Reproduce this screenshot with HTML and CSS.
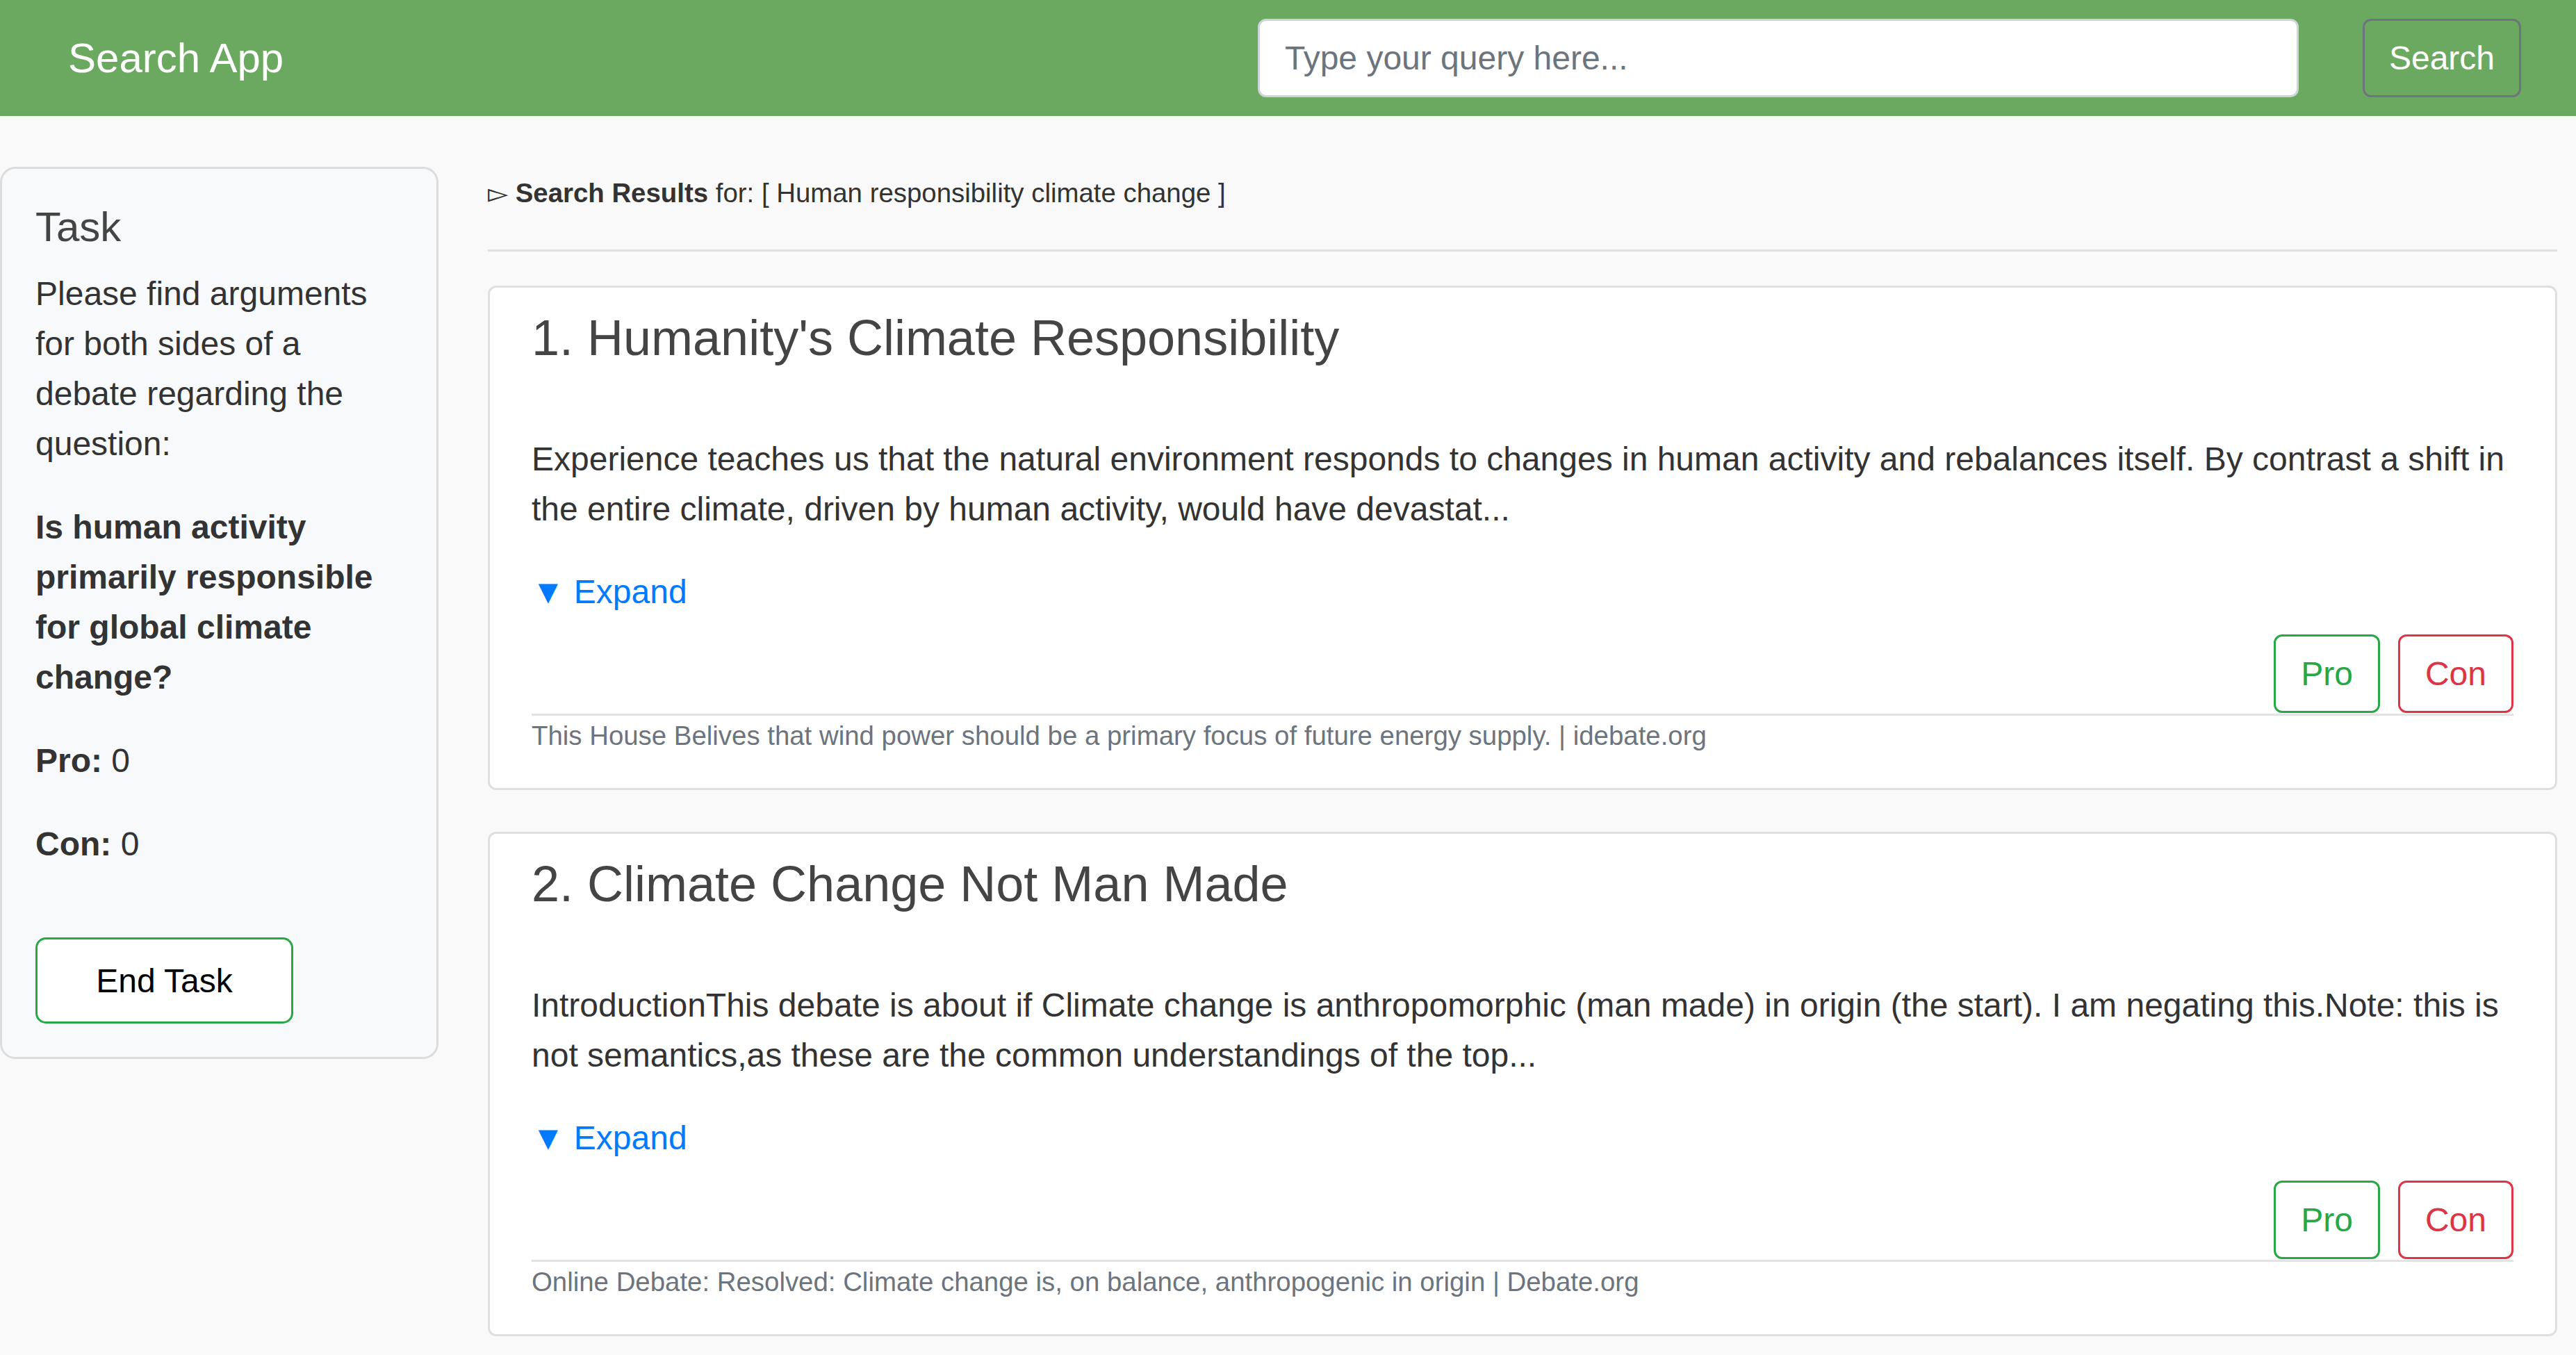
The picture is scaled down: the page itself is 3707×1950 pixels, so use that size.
FILE: index.html
```html
<!DOCTYPE html>
<html lang="en">
<head>
<meta charset="utf-8">
<title>Search App</title>
<link rel="stylesheet" href="styles.css">
</head>
<body>
<nav class="navbar">
  <span class="brand">Search App</span>
  <form class="search-form">
    <input class="search-input" type="text" placeholder="Type your query here...">
    <button class="search-btn" type="button">Search</button>
  </form>
</nav>
<div class="layout">
  <aside class="task-card">
    <h5 class="task-title">Task</h5>
    <p class="task-text">Please find arguments for both sides of a debate regarding the question:</p>
    <p class="task-text"><b>Is human activity primarily responsible for global climate change?</b></p>
    <p class="task-text"><b>Pro:</b> 0</p>
    <p class="task-text"><b>Con:</b> 0</p>
    <button class="end-btn" type="button">End Task</button>
  </aside>
  <main class="main">
    <div class="results-head">▻ <strong>Search Results</strong> for: [ Human responsibility climate change ]</div>
    <div class="divider"></div>
    <article class="result">
      <h4 class="result-title">1. Humanity's Climate Responsibility</h4>
      <p class="result-text">Experience teaches us that the natural environment responds to changes in human activity and rebalances itself. By contrast a shift in the entire climate, driven by human activity, would have devastat...</p>
      <div class="expand">▼ Expand</div>
      <div class="actions">
        <button class="btn-vote pro" type="button">Pro</button>
        <button class="btn-vote con" type="button">Con</button>
      </div>
      <div class="source-rule"></div>
      <div class="source">This House Belives that wind power should be a primary focus of future energy supply. | idebate.org</div>
    </article>
    <article class="result">
      <h4 class="result-title">2. Climate Change Not Man Made</h4>
      <p class="result-text">IntroductionThis debate is about if Climate change is anthropomorphic (man made) in origin (the start). I am negating this.Note: this is not semantics,as these are the common understandings of the top...</p>
      <div class="expand">▼ Expand</div>
      <div class="actions">
        <button class="btn-vote pro" type="button">Pro</button>
        <button class="btn-vote con" type="button">Con</button>
      </div>
      <div class="source-rule"></div>
      <div class="source">Online Debate: Resolved: Climate change is, on balance, anthropogenic in origin | Debate.org</div>
    </article>
  </main>
</div>
</body>
</html>
```

FILE: styles.css
```css
* { box-sizing: border-box; }
html, body { margin: 0; }
body {
  font-family: "Liberation Sans", Arial, sans-serif;
  font-size: 48px;
  line-height: 72px;
  color: #212529;
  background: #f9f9f9;
}

.navbar {
  height: 167px;
  background: #6ca960;
  display: flex;
  align-items: center;
  padding: 0 79px 0 98px;
}
.brand {
  flex: 1;
  font-size: 60px;
  line-height: 90px;
  color: #fff;
}
.search-form {
  display: flex;
  align-items: center;
  gap: 92px;
  margin: 0;
}
.search-input {
  width: 1498px;
  height: 113px;
  border: 3px solid #ced4da;
  border-radius: 12px;
  background: #fff;
  padding: 0 36px;
  font-family: inherit;
  font-size: 48px;
  color: #495057;
  outline: none;
}
.search-input::placeholder { color: #6c757d; }
.search-btn {
  width: 228px;
  height: 113px;
  border: 3px solid #6c757d;
  border-radius: 12px;
  background: transparent;
  color: #fff;
  font-family: inherit;
  font-size: 48px;
  padding: 0;
}

.layout {
  display: grid;
  grid-template-columns: 631px 1fr;
  column-gap: 71px;
  padding-right: 27px;
  align-items: start;
}

.task-card {
  margin-top: 73px;
  background: #f8f9fa;
  border: 3px solid #dcdcdc;
  border-radius: 22px;
  padding: 48px;
}
.task-title {
  margin: 0 0 24px;
  font-size: 60px;
  line-height: 72px;
  font-weight: 500;
  color: #444;
}
.task-text {
  margin: 0 0 48px;
  color: #333;
}
.end-btn {
  display: block;
  margin-top: 98px;
  width: 371px;
  height: 124px;
  border: 3px solid #28a745;
  border-radius: 15px;
  background: #fff;
  color: #000;
  font-family: inherit;
  font-size: 48px;
}

.main { padding-top: 82px; }
.results-head {
  font-size: 38.4px;
  line-height: 57.6px;
  color: #333;
}
.divider {
  margin: 52px 0 49px;
  border-top: 3px solid #e0e0e0;
}
.result {
  background: #fff;
  border: 3px solid #dfdfdf;
  border-radius: 12px;
  padding: 29px 60px 46px;
  margin-bottom: 60px;
}
.result-title {
  margin: 0 0 96px;
  font-size: 72px;
  line-height: 86.4px;
  font-weight: 500;
  color: #444;
}
.result-text {
  margin: 0 0 47px;
  color: #333;
}
.expand {
  color: #007bff;
  margin-bottom: 25px;
}
.actions {
  display: flex;
  justify-content: flex-end;
  gap: 26px;
}
.btn-vote {
  height: 113px;
  padding: 0 36px;
  border: 3px solid;
  border-radius: 12px;
  background: #fff;
  font-family: inherit;
  font-size: 48px;
}
.pro { color: #28a745; border-color: #28a745; }
.con { color: #dc3545; border-color: #dc3545; }
.source-rule {
  margin-top: 1px;
  border-top: 3px solid #e3e3e3;
}
.source {
  font-size: 38.4px;
  line-height: 57.6px;
  color: #6c757d;
}
```
